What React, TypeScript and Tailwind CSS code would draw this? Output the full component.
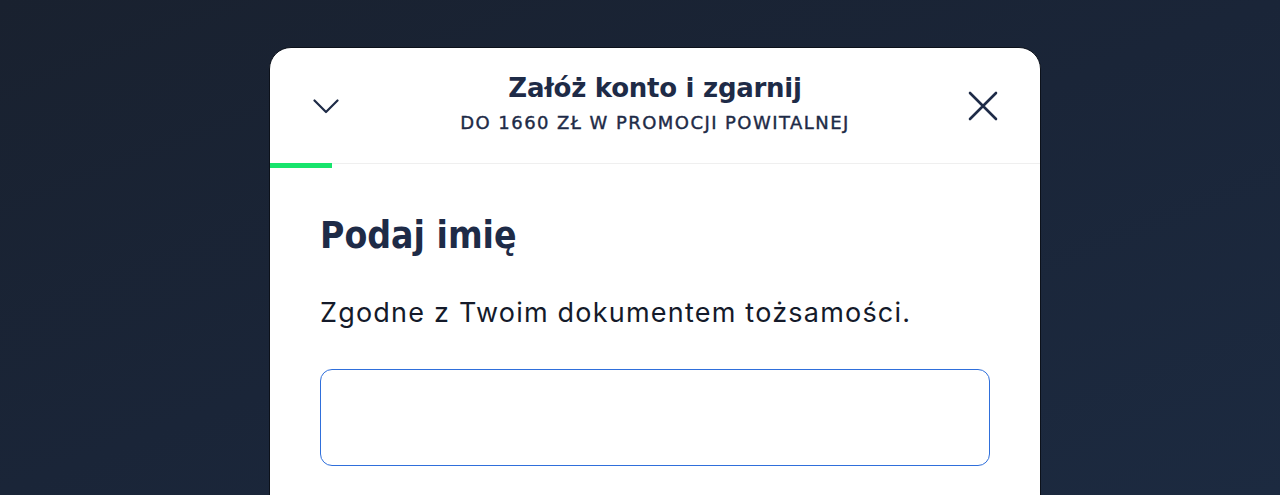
export default function App() {
  return (
    <div className="h-[495px] overflow-hidden bg-[#1a2334] bg-gradient-to-br from-[#19212f] via-[#1a2538] to-[#1c2a40] pt-[47px]">
      <div className="ml-[269px] w-[772px] rounded-t-[22px] border border-[#0c111a] bg-white h-[460px] overflow-hidden">
        <div className="relative flex h-[115px] items-start justify-center">
          <button className="absolute left-[43px] top-[51px] text-[#1e2b47]">
            <svg width="26" height="15" viewBox="0 0 26 15" fill="none" stroke="currentColor" strokeWidth="2.2" strokeLinecap="round" strokeLinejoin="round">
              <path d="M1.5 1.5 13 13 24.5 1.5" />
            </svg>
          </button>
          <div className="pt-[24px] text-center font-['DejaVu_Sans',sans-serif] text-[#1e2b47]">
            <h2 className="text-[26px] font-semibold leading-[32px] tracking-[-0.01em]">Załóż konto i zgarnij</h2>
            <p className="mt-[9px] text-[18px] font-medium tracking-[0.08em] leading-[20px] [-webkit-text-stroke:0.4px_#1e2b47]">
              DO 1660 ZŁ W PROMOCJI POWITALNEJ
            </p>
          </div>
          <button className="absolute right-[42px] top-[43px] text-[#1e2b47]">
            <svg width="30" height="30" viewBox="0 0 30 30" fill="none" stroke="currentColor" strokeWidth="2.6" strokeLinecap="round">
              <path d="M2 2 28 28M28 2 2 28" />
            </svg>
          </button>
        </div>
        <div className="h-[5px] border-t border-[#efefef]">
          <div className="h-[5px] w-[62px] -mt-px bg-[#17e46c]" />
        </div>
        <div className="px-[50px] pt-[46px]">
          <h1 className="font-['DejaVu_Sans_Condensed','DejaVu_Sans',sans-serif] text-[37px] font-bold leading-[44px] text-[#1e2b47]">
            Podaj imię
          </h1>
          <p className="mt-[38px] font-['Inter',sans-serif] text-[27px] tracking-[0.045em] leading-[34px] text-[#141a2a]">
            Zgodne z Twoim dokumentem tożsamości.
          </p>
          <input
            className="mt-[39px] h-[97px] w-full rounded-[12px] border border-[#2f6fdb] px-4 text-[20px] outline-none"
            type="text"
          />
        </div>
      </div>
    </div>
  );
}
